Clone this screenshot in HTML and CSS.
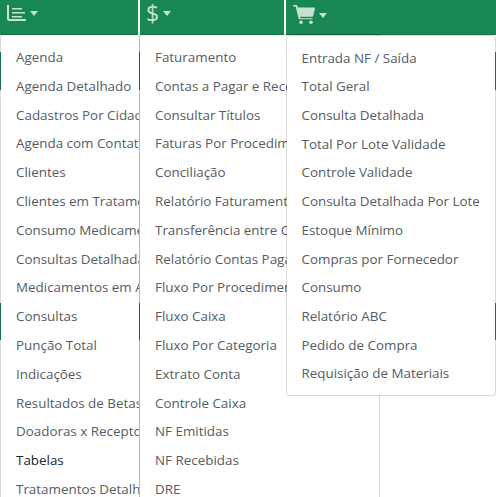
FILE: index.html
```html
<!DOCTYPE html>
<html lang="pt-BR">
<head>
    <meta charset="UTF-8">
    <meta name="viewport" content="width=device-width, initial-scale=1.0">
    <title>Menu</title>
    <link rel="stylesheet" href="styles.css">
</head>
<body>
    <nav class="navbar">
        <div class="nav-item nav-item-first">
            <svg class="nav-icon icon-chart" viewBox="0 0 19 16"><path d="M0 0h2v14h17v2H2a2 2 0 0 1-2-2z"/><path d="M5 3h10v1.6H5zM5 7h13v1.6H5zM5 11h10v1.6H5z"/></svg>
            <span class="caret"></span>
        </div>
        <div class="nav-item nav-item-second">
            <span class="nav-dollar">$</span>
            <span class="caret"></span>
        </div>
        <div class="nav-item nav-item-third">
            <svg class="nav-icon icon-cart" viewBox="0 0 22 19"><path d="M0 0h3.4c.5 0 .9.3 1 .8L4.8 2.5H21c.6 0 1 .6.9 1.2l-1.7 7.2c-.1.5-.5.8-1 .8H7.2l.3 1.6h11.2c.6 0 1 .4 1 1H6.6c-.5 0-.9-.3-1-.8L2.6 1.6H0z"/><circle cx="8" cy="17.2" r="1.8"/><circle cx="18" cy="17.2" r="1.8"/></svg>
            <span class="caret"></span>
        </div>
    </nav>

    <main class="content">
        <div class="band band-top"></div>
        <div class="band band-bottom"></div>
    </main>

    <ul class="menu menu-first">
        <li>Agenda</li>
        <li>Agenda Detalhado</li>
        <li>Cadastros Por Cidade</li>
        <li>Agenda com Contato</li>
        <li>Clientes</li>
        <li>Clientes em Tratamento</li>
        <li>Consumo Medicamentos</li>
        <li>Consultas Detalhadas</li>
        <li>Medicamentos em Andamento</li>
        <li>Consultas</li>
        <li>Punção Total</li>
        <li>Indicações</li>
        <li>Resultados de Betas</li>
        <li>Doadoras x Receptoras</li>
        <li class="active">Tabelas</li>
        <li>Tratamentos Detalhados</li>
    </ul>

    <ul class="menu menu-second">
        <li>Faturamento</li>
        <li>Contas a Pagar e Receber</li>
        <li>Consultar Títulos</li>
        <li>Faturas Por Procedimento</li>
        <li>Conciliação</li>
        <li>Relatório Faturamento</li>
        <li>Transferência entre Contas</li>
        <li>Relatório Contas Pagas</li>
        <li>Fluxo Por Procedimento</li>
        <li>Fluxo Caixa</li>
        <li>Fluxo Por Categoria</li>
        <li>Extrato Conta</li>
        <li>Controle Caixa</li>
        <li>NF Emitidas</li>
        <li>NF Recebidas</li>
        <li>DRE</li>
    </ul>

    <ul class="menu menu-third">
        <li>Entrada NF / Saída</li>
        <li>Total Geral</li>
        <li>Consulta Detalhada</li>
        <li>Total Por Lote Validade</li>
        <li>Controle Validade</li>
        <li>Consulta Detalhada Por Lote</li>
        <li>Estoque Mínimo</li>
        <li>Compras por Fornecedor</li>
        <li>Consumo</li>
        <li>Relatório ABC</li>
        <li>Pedido de Compra</li>
        <li>Requisição de Materiais</li>
    </ul>
</body>
</html>
```

FILE: styles.css
```css
html, body {
    height: 497px;
    overflow: hidden;
}
body {
    margin: 0;
    background: #fff;
    font-family: "Open Sans", "Noto Sans", sans-serif;
    font-size: 13.4px;
    color: #555c63;
    position: relative;
}
.navbar {
    display: flex;
    height: 35px;
}
.nav-item {
    display: flex;
    align-items: center;
    background: #198754;
    box-sizing: border-box;
}
.nav-item-first {
    width: 138px;
    margin-right: 2px;
    padding: 0 0 9px 7px;
}
.nav-item-second {
    width: 144px;
    margin-right: 2px;
    padding: 0 0 9px 6px;
}
.nav-item-third {
    flex: 1;
    padding: 0 0 6px 7px;
    border-bottom: 1px solid #157347;
}
.nav-icon {
    display: block;
    fill: rgba(255, 255, 255, 0.75);
}
.icon-chart {
    width: 19px;
    height: 16px;
}
.icon-cart {
    width: 22px;
    height: 19px;
}
.nav-dollar {
    font-size: 23px;
    line-height: 26px;
    color: rgba(255, 255, 255, 0.75);
}
.caret {
    width: 0;
    height: 0;
    margin-left: 4px;
    border-top: 5px solid rgba(255, 255, 255, 0.75);
    border-left: 4.5px solid transparent;
    border-right: 4.5px solid transparent;
}
.nav-item-second .caret {
    margin-top: 1px;
}
.nav-item-third .caret {
    margin-top: 3px;
}
.band {
    height: 38px;
    background: #198754;
}
.band-top {
    margin-top: 17px;
}
.band-bottom {
    height: 37px;
    margin-top: 213px;
}
.menu {
    position: absolute;
    margin: 0;
    padding: 8px 0;
    list-style: none;
    background: #fff;
    background-clip: padding-box;
    border: 1px solid rgba(0, 0, 0, 0.15);
    border-radius: 4px;
    overflow: hidden;
    box-sizing: border-box;
}
.menu li {
    height: 28.8px;
    line-height: 28.8px;
    white-space: nowrap;
}
.menu .active {
    color: #212529;
}
.menu-first {
    top: 34px;
    left: 0;
    width: 140px;
    padding-left: 15px;
}
.menu-second {
    top: 34px;
    left: 139px;
    width: 241px;
    padding-left: 15px;
}
.menu-third {
    top: 35px;
    left: 286px;
    width: 210px;
    padding: 7.7px 0 7.3px 14.5px;
}
.menu-third li {
    height: 28.7px;
    line-height: 28.7px;
}
```
